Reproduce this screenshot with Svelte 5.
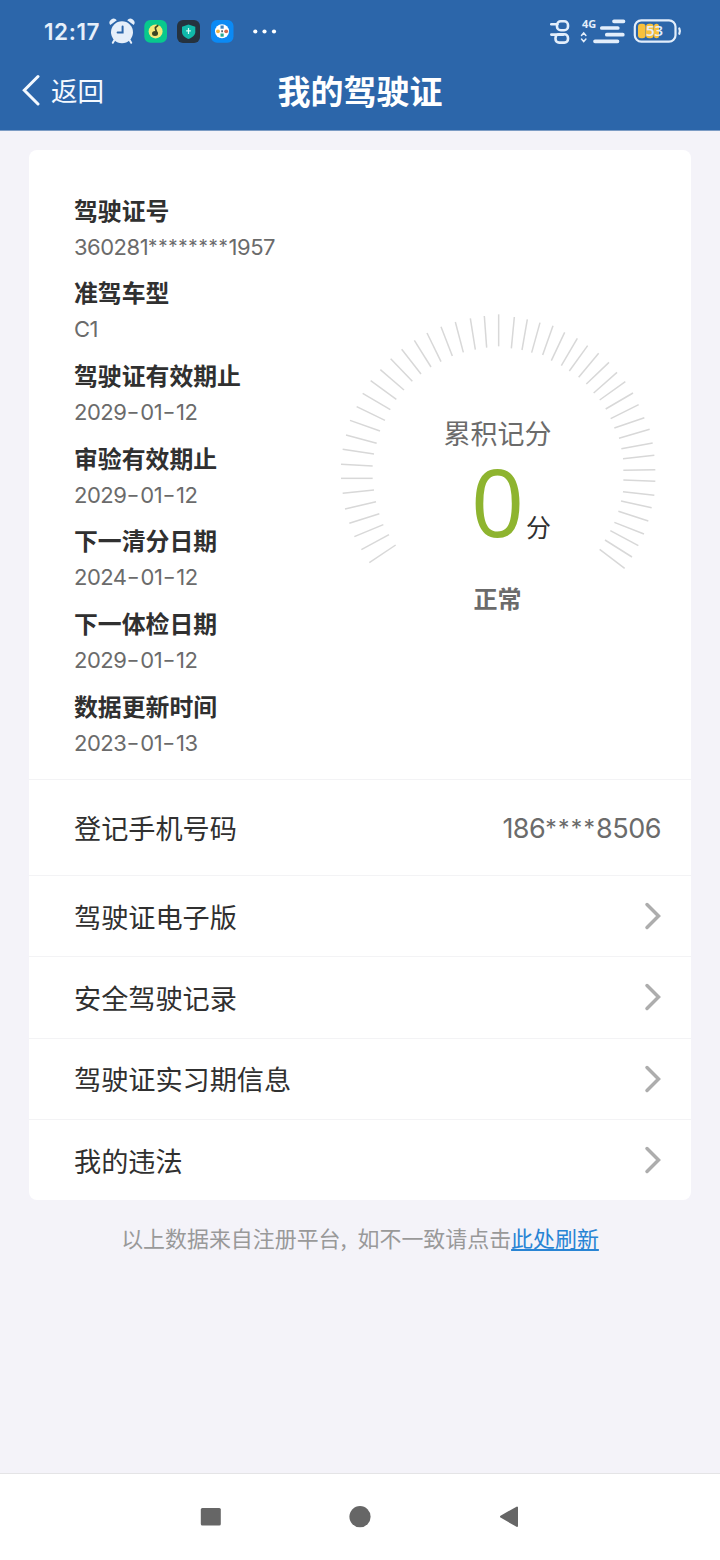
<script>
	const details = [
		{ label: '驾驶证号', value: '360281********1957' },
		{ label: '准驾车型', value: 'C1' },
		{ label: '驾驶证有效期止', value: '2029-01-12' },
		{ label: '审验有效期止', value: '2029-01-12' },
		{ label: '下一清分日期', value: '2024-01-12' },
		{ label: '下一体检日期', value: '2029-01-12' },
		{ label: '数据更新时间', value: '2023-01-13' }
	];

	const links = ['驾驶证电子版', '安全驾驶记录', '驾驶证实习期信息', '我的违法'];

	// outer x, outer y, inner x, inner y of each dial tick, clockwise
	const ticks = [
		[118, 788, 197, 735], [94, 749, 177, 704], [73, 710, 160, 674], [58, 670, 148, 641],
		[45, 627, 138, 605], [38, 580, 132, 570], [33, 535, 128, 535], [33, 493, 128, 498],
		[38, 448, 132, 462], [48, 405, 140, 430], [60, 361, 150, 393], [80, 320, 165, 361],
		[98, 280, 181, 329], [122, 242, 199, 298], [151, 209, 222, 270], [182, 176, 247, 244],
		[215, 148, 273, 222], [253, 121, 303, 201], [291, 99, 333, 185], [333, 80, 367, 168],
		[376, 66, 400, 157], [421, 55, 436, 149], [463, 48, 470, 143], [506, 43, 506, 139],
		[553, 51, 544, 145], [592, 58, 576, 150], [630, 68, 605, 158], [669, 77, 638, 165],
		[704, 97, 664, 182], [742, 115, 694, 197], [773, 137, 718, 213], [806, 160, 746, 232],
		[837, 187, 769, 252], [861, 217, 791, 279], [886, 245, 809, 300], [909, 279, 827, 327],
		[926, 314, 842, 356], [943, 353, 853, 384], [959, 388, 867, 415], [968, 429, 874, 446],
		[973, 466, 879, 476], [976, 509, 880, 511], [976, 544, 880, 540], [973, 586, 879, 575],
		[965, 623, 873, 603], [955, 663, 865, 634], [942, 702, 853, 667], [925, 737, 841, 692],
		[906, 771, 825, 720], [884, 805, 809, 748]
	];
</script>

<!-- digits, stars and dashes are spaced separately -->
{#snippet spaced(value)}
	{#each value.match(/\*+|-|[^*-]+/g) as run}<span class:stars={run[0] === '*'} class:dash={run === '-'}>{run}</span>{/each}
{/snippet}

<div class="screen">
	<header>
		<div class="status">
			<span class="clock">12:17</span>
			<svg class="apps" width="180" height="32" viewBox="108 16 180 32">
				<g fill="#e6effa">
					<circle cx="122" cy="32.3" r="11" />
					<path d="M110.300 25a4 4 0 0 1 6.500-4.700zM133.700 25a4 4 0 0 0-6.500-4.700z" />
					<path d="M115 39l-2.200 3.800M129 39l2.200 3.800" stroke="#e6effa" stroke-width="2" stroke-linecap="round" />
				</g>
				<path d="M122.600 26.500v6h-5" fill="none" stroke="#2c66aa" stroke-width="2" stroke-linecap="round" />
				<rect x="144.300" y="20" width="22.700" height="22.700" rx="6" fill="#08c98d" />
				<circle cx="155.600" cy="31.400" r="7" fill="#f4e97a" />
				<ellipse cx="155" cy="33.600" rx="3" ry="2.500" fill="#3d4724" />
				<path d="M157 34c-.3-3-2-4.500-1.600-6.500l2.900-2.300" fill="none" stroke="#3d4724" stroke-width="1.700" />
				<rect x="177" y="20" width="23" height="23" rx="6" fill="#25323e" />
				<path d="M188.500 24.500l6.800 2.300v5.200c0 3.500-3.200 5.500-6.800 7-3.600-1.500-6.500-3.500-6.500-7v-5.200z" fill="#10b9aa" />
				<path d="M188.500 28v6M186.200 30.800h4.600" stroke="#d9fff9" stroke-width="1.200" />
				<rect x="211" y="20" width="22.500" height="22.700" rx="6" fill="#0b8af5" />
				<circle cx="222" cy="31.300" r="7" fill="#fff" />
				<path d="M220.500 25.500h3.200v3.200h-3.200z" fill="#3b83c2" />
				<path d="M220.500 33.500h3.200v3.200h-3.200z" fill="#25a995" />
				<circle cx="218" cy="31.300" r="1.900" fill="#efb341" />
				<circle cx="226.200" cy="31.300" r="1.900" fill="#d06b50" />
				<path d="M221.300 30.300h1.600v2h-1.600z" fill="#456" />
				<g fill="#fff">
					<circle cx="255.300" cy="31.500" r="2.100" />
					<circle cx="264.500" cy="31.500" r="2.100" />
					<circle cx="274" cy="31.500" r="2.100" />
				</g>
			</svg>
			<svg class="signals" width="140" height="32" viewBox="545 16 140 32">
				<g fill="none" stroke="#e3eefb" stroke-width="2.600" stroke-linecap="round">
					<rect x="557" y="21.300" width="11" height="9" rx="3.800" />
					<path d="M551.300 24.300h6" />
					<rect x="555.500" y="34.300" width="12.500" height="8.300" rx="3.600" />
					<path d="M551.300 34.600h12" />
					<path d="M581.500 35.500l2.200-2.600 2.200 2.600M581.500 39l2.200 2.600 2.200-2.600" stroke-width="1.500" />
					<path d="M614 21.300h9.500M601.800 28h16M606.800 34.700h16M595 41.300h22.500" stroke-width="3.700" />
					<rect x="634.800" y="20.300" width="40.700" height="21.400" rx="6.500" stroke-width="2.200" />
					<path d="M679.300 28.500q1.200 2.500 0 5.300" stroke-width="2.200" />
				</g>
				<g fill="#f8c13c">
					<rect x="638" y="23.800" width="7.600" height="14.500" rx="3" />
					<rect x="646" y="23.800" width="7.600" height="14.500" rx="3" />
					<rect x="654" y="23.800" width="5" height="14.500" rx="2.500" />
				</g>
				<text class="network" x="582" y="28">4G</text>
				<text class="charge" x="646" y="36.300">53</text>
			</svg>
		</div>
		<nav>
			<button class="back">
				<svg width="20" height="34" viewBox="0 0 20 34">
					<path d="M18 3.500L4.300 17.300 18 31" />
				</svg>
				返回
			</button>
			<h1>我的驾驶证</h1>
		</nav>
	</header>

	<main>
		<section class="card">
			<div class="licence">
				<dl>
					{#each details as { label, value }}
						<dt>{label}</dt>
						<dd>{@render spaced(value)}</dd>
					{/each}
				</dl>
				<div class="dial">
					<svg width="340" height="330" viewBox="0 0 1020 990">
						{#each ticks as [x1, y1, x2, y2]}
							<line {x1} {y1} {x2} {y2} />
						{/each}
					</svg>
					<div class="score">
						<p class="caption">累积记分</p>
						<p class="points"><b>0</b><span>分</span></p>
						<p class="state">正常</p>
					</div>
				</div>
			</div>

			<div class="row phone">
				<span>登记手机号码</span>
				<span class="number">{@render spaced('186****8506')}</span>
			</div>

			{#each links as link}
				<div class="row">
					<span>{link}</span>
					<svg width="18" height="30" viewBox="0 0 18 30">
						<path d="M3 3.500L14.500 15 3 26.500" />
					</svg>
				</div>
			{/each}
		</section>

		<p class="note">以上数据来自注册平台<i>,</i>如不一致请点击<a href="#refresh">此处刷新</a></p>
	</main>

	<footer>
		<svg width="720" height="86" viewBox="0 1474 720 86">
			<rect x="200.800" y="1508" width="20" height="17.500" rx="1.500" />
			<circle cx="360" cy="1516.700" r="10.600" />
			<path d="M501 1516.700L517 1507.500V1525.900z" stroke="#666" stroke-width="2" stroke-linejoin="round" />
		</svg>
	</footer>
</div>

<style>
	:global(body) {
		background: #f4f3f9;
	}

	.screen {
		display: flex;
		flex-direction: column;
		width: 720px;
		height: 1560px;
		overflow: hidden;
		font-family: 'Noto Sans CJK SC', sans-serif;
		color: #303030;
		white-space: nowrap;
	}

	p,
	dl,
	dd,
	h1 {
		margin: 0;
	}

	svg {
		display: block;
		flex: none;
	}

	header {
		height: 130px;
		background: #2c66aa;
		border-bottom: 1px solid #7c9cc5;
		color: #fff;
	}

	.status {
		display: flex;
		height: 32px;
		padding: 16px 35px 0 44px;
	}

	.clock {
		width: 64px;
		font: 600 22.500px/32px Inter, sans-serif;
		letter-spacing: 0.600px;
		color: #e6effa;
	}

	.signals {
		margin-left: auto;
	}

	.network {
		font: 700 11px 'Open Sans', sans-serif;
		fill: #e3eefb;
	}

	.charge {
		font: 600 15px 'Open Sans', sans-serif;
		fill: #e3eefb;
	}

	nav {
		display: grid;
		grid-template-columns: 200px 1fr 200px;
		align-items: center;
		height: 84px;
	}

	.back {
		display: flex;
		align-items: center;
		gap: 11px;
		padding: 0 0 0 20px;
		border: 0;
		background: none;
		font: 400 26.500px/40px 'Noto Sans CJK SC', sans-serif;
		color: #f4f9ff;
	}

	.back path {
		fill: none;
		stroke: #f4f9ff;
		stroke-width: 3;
		stroke-linecap: round;
	}

	h1 {
		font-size: 33px;
		font-weight: 700;
		line-height: 40px;
		text-align: center;
	}

	main {
		flex: 1;
		padding: 19px 29px 0;
	}

	.card {
		background: #fff;
		border-radius: 8px;
	}

	.licence {
		display: flex;
		height: 629px;
	}

	dl {
		width: 256px;
		padding: 41.500px 0 0 45px;
	}

	dt {
		font-size: 23.850px;
		font-weight: 700;
		line-height: 36px;
	}

	dd {
		height: 36px;
		padding-top: 1px;
		margin-bottom: 9.700px;
		font: 400 22px/36px Inter, sans-serif;
		letter-spacing: -0.500px;
		color: #6b6b6b;
	}

	.stars {
		font-size: 0.850em;
		line-height: 0;
		letter-spacing: 0.700px;
		vertical-align: 2px;
	}

	.dash {
		font-size: 1.350em;
		font-weight: 300;
		line-height: 0;
		letter-spacing: 0.500px;
		vertical-align: -2px;
	}

	.dial {
		position: relative;
		margin-top: 150px;
	}

	.dial line {
		stroke: #d8d8d8;
		stroke-width: 4.500;
	}

	.score {
		position: absolute;
		top: 113px;
		left: 0;
		width: 335px;
		text-align: center;
	}

	.caption {
		font-size: 27px;
		line-height: 40px;
		color: #6b6b6b;
	}

	.points {
		display: flex;
		justify-content: center;
		align-items: baseline;
		height: 96px;
		padding: 10px 0 0 27px;
		line-height: 30px;
	}

	.points b {
		font: 400 93px/76px 'Open Sans', sans-serif;
		color: #8eb42f;
	}

	.points span {
		margin-left: 2px;
		font-size: 25px;
	}

	.state {
		padding-top: 21px;
		font-size: 24px;
		font-weight: 700;
		line-height: 36px;
		color: #6b6b6b;
	}

	.row {
		display: flex;
		justify-content: space-between;
		align-items: center;
		height: 80.300px;
		padding: 0 29px 0 45px;
		border-top: 1px solid #f3f3f5;
		font-size: 27.150px;
	}

	.row path {
		fill: none;
		stroke: #adadad;
		stroke-width: 3.500;
		stroke-linecap: round;
	}

	.phone {
		height: 95px;
	}

	.number {
		padding: 2px 1px 0 0;
		font: 400 27px/36px Inter, sans-serif;
		letter-spacing: -0.500px;
		color: #6b6b6b;
	}

	.number .stars {
		letter-spacing: 1.200px;
	}

	.note {
		margin-top: 21px;
		font-size: 21.950px;
		line-height: 34px;
		text-align: center;
		color: #999;
	}

	.note i {
		display: inline-block;
		width: 17px;
		font-style: normal;
		text-align: left;
	}

	.note a {
		color: #2884d4;
		text-underline-offset: 2px;
	}

	footer {
		height: 86px;
		border-top: 1px solid #e4e4e6;
		background: #fff;
	}

	footer svg {
		fill: #666;
	}
</style>
